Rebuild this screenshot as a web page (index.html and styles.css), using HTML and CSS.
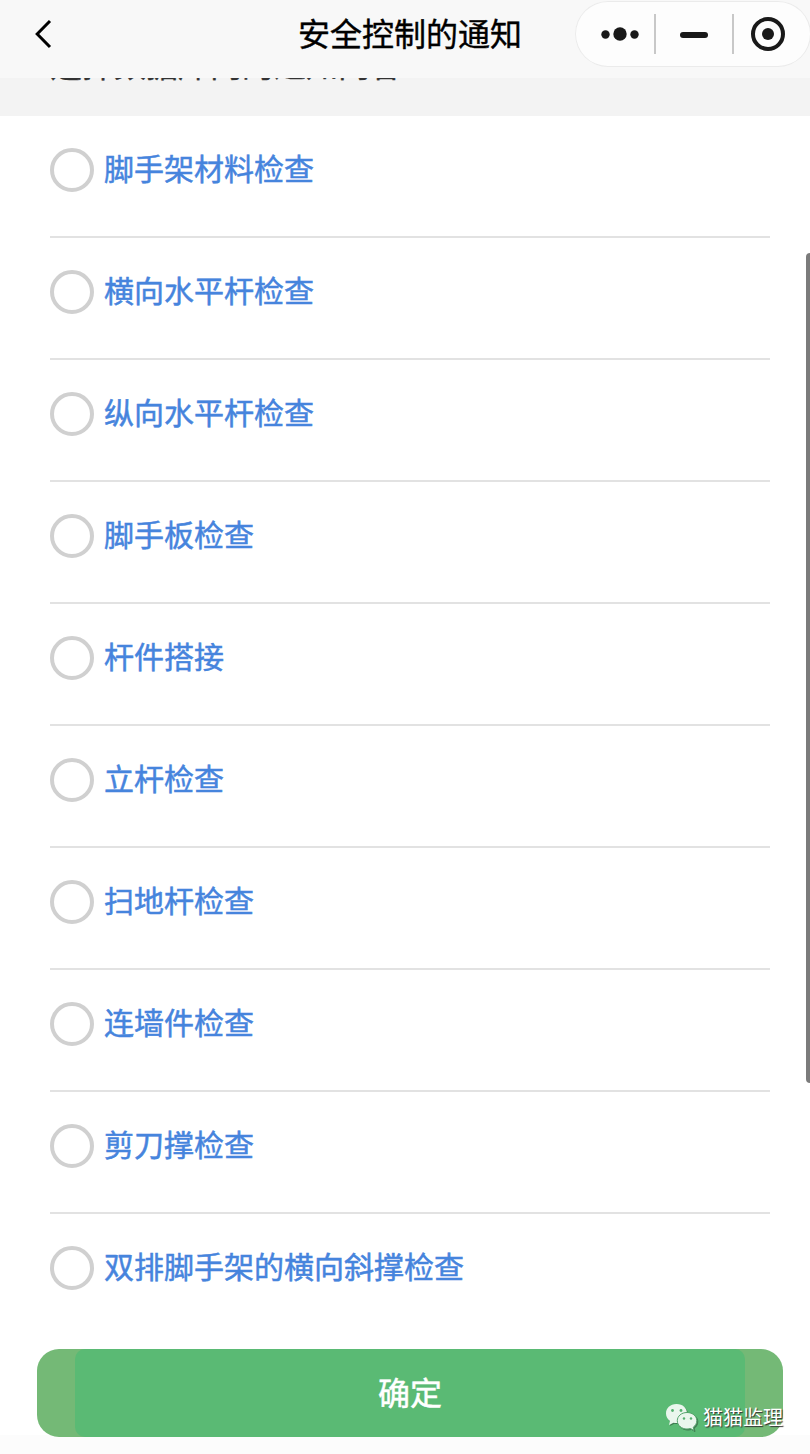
FILE: index.html
```html
<!DOCTYPE html>
<html lang="zh-CN">
<head>
<meta charset="utf-8">
<title>安全控制的通知</title>
<link rel="stylesheet" href="styles.css">
</head>
<body>
<div class="app">
  <header class="navbar">
    <svg class="back" viewBox="0 0 20 30" width="20" height="30"><path d="M18 2 5.200 15 18 28" fill="none" stroke="#000" stroke-width="3"/></svg>
    <h1 class="title">安全控制的通知</h1>
    <div class="capsule">
      <svg viewBox="0 0 236 66" width="236" height="66">
        <g fill="#191919">
          <circle cx="30.500" cy="33.500" r="4.200"/><circle cx="45" cy="33" r="6.700"/><circle cx="59.500" cy="33.500" r="4.200"/>
          <rect x="105" y="31" width="28" height="6" rx="3"/>
          <circle cx="193" cy="33" r="6"/>
        </g>
        <circle cx="193" cy="33" r="15" fill="none" stroke="#191919" stroke-width="4"/>
        <path d="M80 13v40M158 13v40" stroke="#c8c8c8" stroke-width="2"/>
      </svg>
    </div>
  </header>
  <div class="section-head"><p class="hint">选择数据库内的通知内容</p></div>
  <main class="list">
    <label class="row"><span class="radio"></span><span class="name">脚手架材料检查</span></label>
    <label class="row"><span class="radio"></span><span class="name">横向水平杆检查</span></label>
    <label class="row"><span class="radio"></span><span class="name">纵向水平杆检查</span></label>
    <label class="row"><span class="radio"></span><span class="name">脚手板检查</span></label>
    <label class="row"><span class="radio"></span><span class="name">杆件搭接</span></label>
    <label class="row"><span class="radio"></span><span class="name">立杆检查</span></label>
    <label class="row"><span class="radio"></span><span class="name">扫地杆检查</span></label>
    <label class="row"><span class="radio"></span><span class="name">连墙件检查</span></label>
    <label class="row"><span class="radio"></span><span class="name">剪刀撑检查</span></label>
    <label class="row"><span class="radio"></span><span class="name">双排脚手架的横向斜撑检查</span></label>
  </main>
  <footer class="footer">
    <div class="confirm"><div class="confirm-inner">确定</div></div>
  </footer>
  <div class="scrollbar"></div>
  <div class="watermark">
    <svg class="wechat" viewBox="0 0 34 30" width="34" height="30">
      <path d="M11.500 1C5 1 1 5.300 1 10.500c0 3.200 1.600 5.700 4 7.400L4 22l4.500-2.300c1 .3 2 .3 3.200.3C18 20 22 15.800 22 10.500S18 1 11.500 1z"/>
      <path class="front" d="M22 9.500c-5.500 0-9.700 3.600-9.700 8.200s4.200 8.300 9.700 8.300c1.300 0 2.400-.2 3.500-.5L29 27.500l-.8-3.200c2.200-1.600 3.600-3.900 3.600-6.600 0-4.600-4.300-8.200-9.800-8.200z"/>
      <g fill="#55b16f"><circle cx="7.500" cy="7.500" r="1.400"/><circle cx="16" cy="7.500" r="1.400"/><circle cx="19" cy="15.500" r="1.200"/><circle cx="26" cy="15.500" r="1.200"/></g>
    </svg>
    <span>猫猫监理</span>
  </div>
</div>
</body>
</html>
```
FILE: styles.css
```css
* { box-sizing: border-box; }
body {
  margin: 0;
  font-family: "Noto Sans CJK SC", sans-serif;
  background: #fff;
}
.app {
  position: relative;
  display: flex;
  flex-direction: column;
  width: 810px;
  height: 1454px;
  overflow: hidden;
}
.navbar {
  display: grid;
  grid-template-columns: 298px 224px 1fr;
  height: 78px;
  background: #f8f8f8;
}
.back { margin: 19px 0 0 32px; }
.title {
  margin: 0;
  font-size: 32px;
  font-weight: 400;
  line-height: 64px;
  white-space: nowrap;
  color: #000;
  -webkit-text-stroke: 0.4px;
}
.capsule {
  width: 236px;
  height: 66px;
  margin: 1px 0 0 53px;
  border-radius: 33px;
  background: #fdfdfd;
  box-shadow: inset 0 0 0 1px #ebebeb;
}
.section-head {
  height: 38px;
  padding-left: 50px;
  overflow: hidden;
  background: #f3f3f3;
}
.hint {
  margin: -38px 0 0;
  font-size: 32px;
  line-height: 46px;
  color: #333;
  -webkit-text-stroke: 0.4px;
}
.list { padding: 0 40px 0 50px; }
.row {
  display: flex;
  gap: 10px;
  height: 122px;
  padding-top: 32px;
  border-bottom: 2px solid #e2e2e2;
}
.row:last-child { border-bottom: 0; }
.radio {
  flex: none;
  width: 44px;
  height: 44px;
  border: 4px solid #d0d0d0;
  border-radius: 50%;
}
.name {
  font-size: 30px;
  line-height: 38px;
  font-weight: 400;
  color: #4684dd;
  -webkit-text-stroke: 0.5px;
}
.footer {
  flex: 1;
  padding: 13px 27px 0 37px;
  background: linear-gradient(#fff 99px, #fcfcfc 99px);
}
.confirm {
  height: 88px;
  padding: 0 38px;
  border-radius: 22px;
  background: #74b976;
}
.confirm-inner {
  height: 88px;
  border-radius: 10px;
  background: #5aba74;
  color: #fff;
  font-size: 32px;
  line-height: 84px;
  text-align: center;
  -webkit-text-stroke: 0.5px;
}
.scrollbar {
  position: absolute;
  top: 253px;
  right: -4px;
  width: 8px;
  height: 830px;
  border-radius: 4px;
  background: #7b7b7b;
}
.watermark {
  position: absolute;
  left: 665px;
  top: 1403px;
  display: flex;
  gap: 4px;
  font-size: 20px;
  line-height: 28px;
  white-space: nowrap;
  color: #fff;
  text-shadow: 1px 1px 1px #333;
}
.wechat { fill: #eaf6ed; filter: drop-shadow(1px 1px 0 #3f7a50); }
.front { stroke: #55a56c; stroke-width: 1; }
```
